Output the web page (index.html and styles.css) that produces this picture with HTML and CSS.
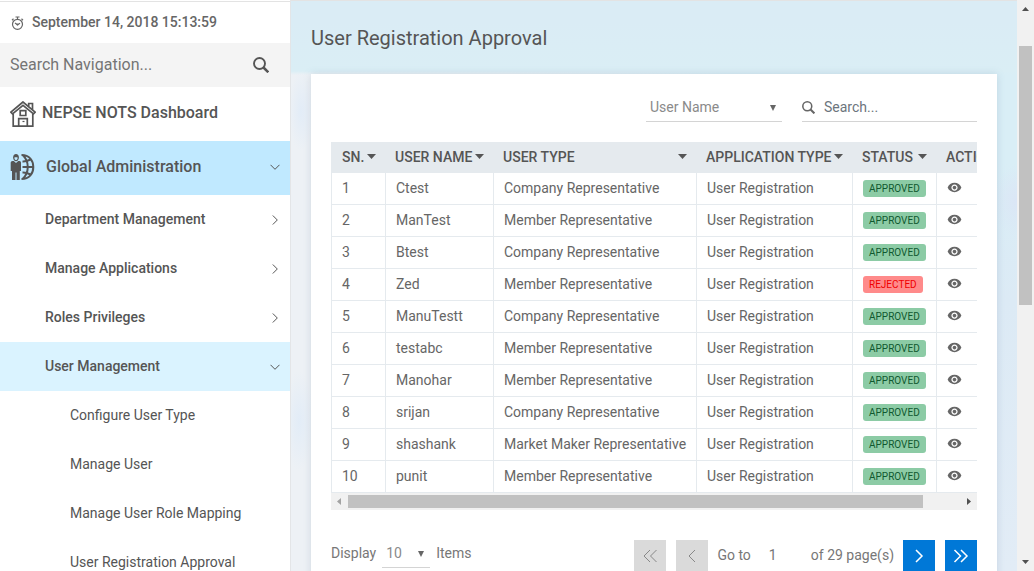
FILE: index.html
```html
<!DOCTYPE html>
<html lang="en">
<head>
<meta charset="utf-8">
<title>User Registration Approval</title>
<link rel="stylesheet" href="styles.css">
</head>
<body>
<svg class="defs" aria-hidden="true">
  <symbol id="eye" viewBox="0 0 24 24"><path fill="currentColor" d="M12 4.500C7 4.500 2.730 7.610 1 12c1.730 4.390 6 7.500 11 7.500s9.270-3.110 11-7.500c-1.730-4.390-6-7.500-11-7.500zM12 17c-2.760 0-5-2.240-5-5s2.240-5 5-5 5 2.240 5 5-2.240 5-5 5zm0-8c-1.660 0-3 1.340-3 3s1.340 3 3 3 3-1.340 3-3-1.340-3-3-3z"/></symbol>
  <symbol id="caret" viewBox="0 0 9 5"><path fill="currentColor" d="M0 0h9L4.500 5z"/></symbol>
  <symbol id="drop" viewBox="0 0 6 6"><path fill="currentColor" d="M0 0h6L3 6z"/></symbol>
  <symbol id="mag" viewBox="0 0 16 16"><g fill="none" stroke="currentColor"><circle cx="6.500" cy="6.500" r="5.500" stroke-width="1.900"/><path d="M10.500 10.500L15.300 15.300" stroke-width="2.500"/></g></symbol>
  <symbol id="down" viewBox="0 0 10 10"><path fill="none" stroke="currentColor" d="M.5 2.800L5 7.300l4.500-4.500"/></symbol>
  <symbol id="right" viewBox="0 0 10 10"><path fill="none" stroke="currentColor" d="M2.800.5L7.300 5 2.800 9.500"/></symbol>
</svg>
<div class="page">
  <aside class="sidebar">
    <div class="clock">
      <svg class="icon-clock" viewBox="0 0 13 14"><g fill="none" stroke="currentColor" stroke-width="1.200"><circle cx="6.500" cy="8.300" r="5"/><path d="M4.500 1h4M6.500 1v2M1 4.200l1.500-1.400M12 4.200l-1.500-1.400M4 7l2.500 1.800L9 7.300"/></g><circle cx="6.500" cy="8.500" r="1" fill="currentColor"/></svg>
      <time>September 14, 2018 15:13:59</time>
    </div>
    <div class="nav-search">
      <input type="text" placeholder="Search Navigation..." aria-label="Search navigation">
      <button type="button" aria-label="Search"><svg class="icon-16"><use href="#mag"/></svg></button>
    </div>
    <nav>
      <a href="#" class="nav-top nav-home">
        <svg class="icon-home" viewBox="0 0 26 26"><g fill="none" stroke="currentColor" stroke-width="1.700"><path d="M3.200 12.800v12.300h19.600V12.800"/><path d="M13 1L.9 11.200l1.600 1.700L13 4.300l10.500 8.600 1.600-1.700z"/><path d="M18.700 5.200V2.500h3.800v6.200M10.200 9.700h5.600v4.800h-5.600zM8.700 25v-7.300h8.600V25"/><path d="M12.500 20.500h2" stroke-width="1.200"/></g></svg>
        <span>NEPSE NOTS Dashboard</span>
      </a>
      <a href="#" class="nav-top nav-open">
        <svg class="icon-global" viewBox="0 0 24 26"><g fill="currentColor"><path d="M2.600 3.500C2.600 1.200 3.700 0 5.500 0s2.900 1.200 2.900 3.500c0 2-1.200 3.700-2.900 3.700S2.600 5.500 2.600 3.500z"/><path d="M.2 8.500Q.2 7 2 7h1.300l2.200 2 2.200-2H9q1.500 0 1.500 1.500V17H9.300v9H6V18.500H5V26H1.500v-9H.2z"/></g><path d="M4 3.300h3v1.200Q6.700 6 5.500 6 4.300 6 4 4.500z" fill="#c0e9ff"/><g fill="none" stroke="currentColor" stroke-width="2"><path d="M11 1C19 1 22.800 6.500 22.800 13S19 25 11 25M12 1c7 6 7 18 0 24M12 13h11"/><path d="M12 7.500q4 .2 8-2M12 18.500q4-.2 8 2"/></g></svg>
        <span>Global Administration</span>
        <svg class="icon-10 arrow"><use href="#down"/></svg>
      </a>
      <a href="#" class="nav-sub"><span>Department Management</span><svg class="icon-10 arrow"><use href="#right"/></svg></a>
      <a href="#" class="nav-sub"><span>Manage Applications</span><svg class="icon-10 arrow"><use href="#right"/></svg></a>
      <a href="#" class="nav-sub"><span>Roles Privileges</span><svg class="icon-10 arrow"><use href="#right"/></svg></a>
      <a href="#" class="nav-sub nav-current"><span>User Management</span><svg class="icon-10 arrow"><use href="#down"/></svg></a>
      <a href="#" class="nav-leaf">Configure User Type</a>
      <a href="#" class="nav-leaf">Manage User</a>
      <a href="#" class="nav-leaf">Manage User Role Mapping</a>
      <a href="#" class="nav-leaf">User Registration Approval</a>
    </nav>
  </aside>
  <main class="content">
    <h1>User Registration Approval</h1>
    <section class="card">
      <div class="filters">
        <div class="picker picker-field">
          <select aria-label="Search field"><option>User Name</option></select>
          <svg class="icon-drop"><use href="#drop"/></svg>
        </div>
        <div class="table-search">
          <svg class="icon-mag"><use href="#mag"/></svg>
          <input type="text" placeholder="Search..." aria-label="Search table">
        </div>
      </div>
      <div class="table-wrap">
        <table>
          <colgroup><col class="c-sn"><col class="c-name"><col class="c-type"><col class="c-app"><col class="c-status"><col></colgroup>
          <thead><tr>
            <th><div>SN.<svg><use href="#caret"/></svg></div></th>
            <th><div>USER NAME<svg><use href="#caret"/></svg></div></th>
            <th><div>USER TYPE<svg><use href="#caret"/></svg></div></th>
            <th><div>APPLICATION TYPE<svg><use href="#caret"/></svg></div></th>
            <th><div>STATUS<svg><use href="#caret"/></svg></div></th>
            <th><div>ACTION</div></th>
          </tr></thead>
          <tbody>
            <tr><td>1</td><td>Ctest</td><td>Company Representative</td><td>User Registration</td><td><span class="tag">APPROVED</span></td><td><button type="button" class="view" aria-label="View"><svg><use href="#eye"/></svg></button></td></tr>
            <tr><td>2</td><td>ManTest</td><td>Member Representative</td><td>User Registration</td><td><span class="tag">APPROVED</span></td><td><button type="button" class="view" aria-label="View"><svg><use href="#eye"/></svg></button></td></tr>
            <tr><td>3</td><td>Btest</td><td>Company Representative</td><td>User Registration</td><td><span class="tag">APPROVED</span></td><td><button type="button" class="view" aria-label="View"><svg><use href="#eye"/></svg></button></td></tr>
            <tr><td>4</td><td>Zed</td><td>Member Representative</td><td>User Registration</td><td><span class="tag rejected">REJECTED</span></td><td><button type="button" class="view" aria-label="View"><svg><use href="#eye"/></svg></button></td></tr>
            <tr><td>5</td><td>ManuTestt</td><td>Company Representative</td><td>User Registration</td><td><span class="tag">APPROVED</span></td><td><button type="button" class="view" aria-label="View"><svg><use href="#eye"/></svg></button></td></tr>
            <tr><td>6</td><td>testabc</td><td>Member Representative</td><td>User Registration</td><td><span class="tag">APPROVED</span></td><td><button type="button" class="view" aria-label="View"><svg><use href="#eye"/></svg></button></td></tr>
            <tr><td>7</td><td>Manohar</td><td>Member Representative</td><td>User Registration</td><td><span class="tag">APPROVED</span></td><td><button type="button" class="view" aria-label="View"><svg><use href="#eye"/></svg></button></td></tr>
            <tr><td>8</td><td>srijan</td><td>Company Representative</td><td>User Registration</td><td><span class="tag">APPROVED</span></td><td><button type="button" class="view" aria-label="View"><svg><use href="#eye"/></svg></button></td></tr>
            <tr><td>9</td><td>shashank</td><td>Market Maker Representative</td><td>User Registration</td><td><span class="tag">APPROVED</span></td><td><button type="button" class="view" aria-label="View"><svg><use href="#eye"/></svg></button></td></tr>
            <tr><td>10</td><td>punit</td><td>Member Representative</td><td>User Registration</td><td><span class="tag">APPROVED</span></td><td><button type="button" class="view" aria-label="View"><svg><use href="#eye"/></svg></button></td></tr>
          </tbody>
        </table>
      </div>
      <div class="scroll-x" aria-hidden="true">
        <svg viewBox="0 0 17 17"><path d="M10 5v7L6 8.500z" fill="#a3a3a3"/></svg>
        <div class="track-x"><div class="thumb-x"></div></div>
        <svg viewBox="0 0 17 17"><path d="M7 5v7l4-3.500z" fill="#505050"/></svg>
      </div>
      <div class="pager">
        <div class="page-size">
          <label for="size">Display</label>
          <div class="picker picker-size">
            <select id="size"><option>10</option></select>
            <svg class="icon-drop"><use href="#drop"/></svg>
          </div>
          <span>Items</span>
        </div>
        <div class="page-nav">
          <button type="button" class="step" disabled aria-label="First page"><svg viewBox="0 0 16 16"><path d="M8 2L2 8l6 6M14.500 2l-6 6 6 6"/></svg></button>
          <button type="button" class="step" disabled aria-label="Previous page"><svg viewBox="0 0 16 16"><path d="M11 2L5 8l6 6"/></svg></button>
          <label for="goto">Go to</label>
          <input id="goto" type="text" value="1">
          <span class="total">of 29 page(s)</span>
          <button type="button" class="step" aria-label="Next page"><svg viewBox="0 0 16 16"><path d="M5 2l6 6-6 6"/></svg></button>
          <button type="button" class="step" aria-label="Last page"><svg viewBox="0 0 16 16"><path d="M1.500 2l6 6-6 6M8 2l6 6-6 6"/></svg></button>
        </div>
      </div>
    </section>
  </main>
  <div class="scroll-y" aria-hidden="true">
    <svg viewBox="0 0 17 17"><path d="M5 11h7L8.500 7z" fill="#505050"/></svg>
    <div class="track-y"><div class="thumb-y"></div></div>
    <svg viewBox="0 0 17 17"><path d="M5 6h7L8.500 10z" fill="#505050"/></svg>
  </div>
</div>
</body>
</html>
```

FILE: styles.css
```css
* { box-sizing: border-box; }
body {
  margin: 0;
  font-family: Roboto, "Liberation Sans", sans-serif;
  font-size: 14px;
  line-height: 20px;
  color: #666;
  background: #fff;
}
a { color: inherit; text-decoration: none; }
svg { display: block; flex: none; }
button, input, select { font: inherit; color: inherit; border: 0; border-radius: 0; background: none; padding: 0; margin: 0; min-width: 0; outline: 0; }
.defs { display: none; }
.page { display: flex; height: 100vh; overflow: hidden; }

.sidebar { flex: none; width: 291px; padding-top: 1px; border-right: 1px solid #e3e5e7; color: #555; overflow: hidden; }
.clock { display: flex; align-items: center; gap: 8px; height: 42px; padding: 0 0 2px 11px; border-top: 1px solid #e3e3e3; font-weight: 500; color: #666; }
.icon-clock { width: 13px; height: 14px; margin-top: 2px; }
.nav-search { display: flex; align-items: center; height: 44px; padding: 0 21px 0 10px; background: #f4f4f4; font-size: 16px; }
.nav-search input { flex: 1; }
.nav-search input::placeholder { color: #757575; opacity: 1; }
.icon-16 { width: 16px; height: 16px; }
nav { display: flex; flex-direction: column; }
.nav-top { display: flex; align-items: center; height: 54px; padding: 0 10px; font-size: 16px; font-weight: 500; }
.nav-home { gap: 6px; padding-bottom: 3px; }
.icon-home { width: 26px; height: 26px; align-self: flex-end; margin-bottom: 11px; }
.nav-open { gap: 11px; padding-bottom: 2px; background: #c0e9ff; }
.icon-global { width: 25px; height: 26px; }
.icon-10 { width: 10px; height: 10px; }
.arrow { margin-left: auto; }
.nav-sub { display: flex; align-items: center; height: 49px; padding: 0 10px 0 45px; font-weight: 500; }
.nav-sub span { padding-bottom: 2px; }
.nav-current { background: #daf3ff; }
.nav-leaf { height: 49px; padding: 14px 10px 15px 70px; white-space: nowrap; }

.content {
  flex: 1;
  min-width: 0;
  padding: 26px 20px 0;
  border-top: 1px solid #e3e3e3;
  background:
    radial-gradient(ellipse 12px 40px at 10px 110px, #e2ecf7, transparent),
    radial-gradient(ellipse 14px 50px at 8px 420px, #e2ecf7, transparent),
    radial-gradient(ellipse 24px 36px at 100% 200px, #dbe6f6, transparent),
    linear-gradient(#daecf5 0 20px, #daeef5 70px, transparent 74px),
    linear-gradient(90deg, #edf1f5 0 30%, transparent 60%),
    linear-gradient(#d9eef6 0 160px, #dceaf5 300px, #e2ecf6);
}
h1 { margin: 0; font-size: 20px; line-height: 22px; font-weight: 400; color: #555; }
.card { margin-top: 25px; padding: 20px; background: #fff; box-shadow: 0 0 8px rgba(90, 120, 150, .2); }
.filters { display: flex; justify-content: flex-end; gap: 20px; height: 28px; }
.picker { display: grid; align-items: center; border-bottom: 1px solid #d4d4d4; }
.picker select, .picker svg { grid-area: 1 / 1; }
.picker select { width: 100%; height: 27px; padding: 0 0 1px 4px; appearance: none; color: #8a8a8a; }
.picker svg { justify-self: end; margin-right: 6px; pointer-events: none; }
.picker-field { width: 136px; }
.icon-drop { width: 6px; height: 6px; color: #666; }
.table-search { display: flex; align-items: center; gap: 9px; width: 175px; border-bottom: 1px solid #d4d4d4; }
.icon-mag { width: 13px; height: 13px; }
.table-search input { flex: 1; height: 27px; padding-bottom: 2px; }
.table-search input::placeholder { color: #6c757d; opacity: 1; }

.table-wrap { margin-top: 20px; overflow: hidden; }
table { width: 100%; min-width: 688px; table-layout: fixed; border-collapse: separate; border-spacing: 0; }
.c-sn { width: 54px; }
.c-name { width: 108px; }
.c-type { width: 203px; }
.c-app { width: 156px; }
.c-status { width: 84px; }
th, td { padding: 0 0 2px 10px; text-align: left; white-space: nowrap; }
th { height: 31px; background: #e5eaee; font-weight: 500; color: #555; }
th:first-child { padding-left: 11px; }
th div { display: flex; align-items: center; justify-content: space-between; padding-right: 9px; }
th svg { width: 9px; height: 5px; }
td { height: 32px; border-left: 1px solid #e5eaee; border-bottom: 1px solid #e5eaee; }
.tag { display: block; width: fit-content; margin-top: 2px; padding: 0 6px; border-radius: 3px; background: #8ccba5; color: #10592f; font-size: 10px; line-height: 17px; }
.rejected { background: #ff8a8a; color: #f00000; }
.view { display: block; }
.view svg { width: 15px; height: 15px; }

.scroll-x { display: flex; height: 17px; background: #f1f1f1; }
.scroll-x svg { width: 17px; height: 17px; }
.track-x { flex: 1; padding: 2px 0; }
.thumb-x { width: 94%; height: 13px; background: #c1c1c1; }
.scroll-y { display: flex; flex-direction: column; width: 17px; flex: none; background: #f1f1f1; }
.scroll-y svg { width: 17px; height: 17px; }
.track-y { flex: 1; padding: 29px 2px 0; }
.thumb-y { height: 51%; background: #c1c1c1; }

.pager { display: flex; justify-content: space-between; margin-top: 30px; color: #777; }
.page-size { display: flex; align-items: center; gap: 6px; height: 28px; }
.page-size label, .page-size span { padding-bottom: 2px; }
.picker-size { width: 48px; }
.page-nav { display: flex; align-items: center; gap: 9px; }
.page-nav label, .total { padding-bottom: 2px; }
.step { display: grid; place-items: center; width: 32px; height: 32px; background: #0078d7; color: #fff; }
.step + .step { margin-left: 1px; }
.step svg { width: 16px; height: 16px; fill: none; stroke: currentColor; stroke-width: 1.500; }
.step:disabled { background: #dadada; color: #888; }
.step:disabled svg { stroke-width: 1; }
.page-nav input { width: 42px; height: 31px; padding: 0 9px 2px; border-bottom: 1px solid #d4d4d4; }
```
